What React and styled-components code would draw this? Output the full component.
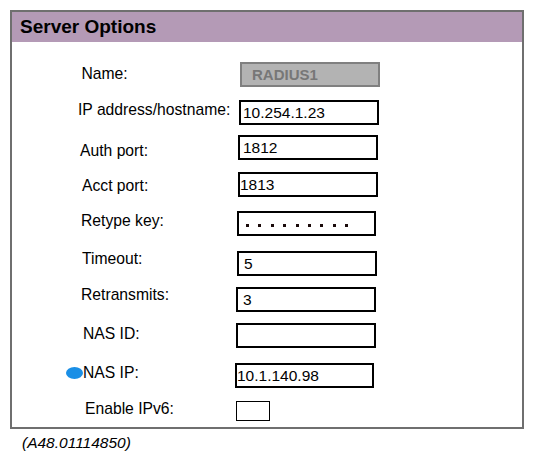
import React from "react";
import styled, { createGlobalStyle } from "styled-components";

const Global = createGlobalStyle`
  html, body { margin: 0; padding: 0; background: #ffffff; }
  body { font-family: "Liberation Sans", Arial, sans-serif; color: #000; }
`;

const Page = styled.div`
  padding: 10px 10px 0 10px;
  width: 514px;
`;

const Panel = styled.section`
  border: 2px solid #6f6f6f;
  background: #ffffff;
`;

const Header = styled.h2`
  margin: 0;
  height: 30px;
  line-height: 30px;
  padding-left: 8px;
  background: #b49ab6;
  font-size: 19px;
  font-weight: bold;
  color: #000;
`;

const Body = styled.div`
  display: flex;
  flex-direction: column;
  padding: 20px 0 6px 0;
`;

const Row = styled.div`
  display: grid;
  grid-template-columns: 223px auto;
  align-items: start;
  margin-top: ${(p) => p.$gap || 0}px;
`;

const Label = styled.div`
  display: flex;
  align-items: center;
  padding-left: ${(p) => p.$indent}px;
  margin-top: ${(p) => p.$drop || 0}px;
  font-size: 15.7px;
  line-height: 18px;
  white-space: nowrap;
`;

const Marker = styled.span`
  display: inline-block;
  width: 17px;
  height: 12px;
  border-radius: 50%;
  background: #1a8fe6;
  flex: none;
`;

const Field = styled.div`
  box-sizing: border-box;
  display: flex;
  align-items: center;
  margin-left: ${(p) => p.$shift}px;
  width: ${(p) => p.$w || 140}px;
  height: ${(p) => p.$h || 25}px;
  padding-left: ${(p) => p.$pad || 0}px;
  border: 2px solid #000;
  background: #fff;
  font-size: 15.5px;
  white-space: nowrap;
`;

const DisabledField = styled(Field)`
  border-color: #808080;
  background: #b3b3b3;
  color: #777777;
  font-weight: bold;
  font-size: 15px;
`;

const CheckBox = styled(Field)`
  border-width: 1.5px;
`;

const Dots = styled.div`
  display: flex;
  gap: 9.4px;
  margin-top: 4px;
`;

const Dot = styled.span`
  width: 3px;
  height: 3px;
  background: #1a0a0a;
`;

const Footnote = styled.p`
  margin: 5px 0 0 0;
  padding-left: 12px;
  font-size: 15.5px;
  line-height: 18px;
  font-style: italic;
`;

export default function App() {
  return (
    <>
      <Global />
      <Page>
        <Panel>
          <Header>Server Options</Header>
          <Body>
            <Row>
              <Label $indent={69.5} $drop={3}>Name:</Label>
              <DisabledField $shift={5} $w={140} $pad={10}>RADIUS1</DisabledField>
            </Row>
            <Row $gap={13}>
              <Label $indent={66} $drop={1}>IP address/hostname:</Label>
              <Field $shift={4} $w={140} $pad={2}>10.254.1.23</Field>
            </Row>
            <Row $gap={10}>
              <Label $indent={68} $drop={7}>Auth port:</Label>
              <Field $shift={3} $w={140} $pad={3}>1812</Field>
            </Row>
            <Row $gap={12}>
              <Label $indent={70} $drop={5}>Acct port:</Label>
              <Field $shift={3} $w={140} $pad={0}>1813</Field>
            </Row>
            <Row $gap={14}>
              <Label $indent={69} $drop={1}>Retype key:</Label>
              <Field $shift={2} $w={139} $pad={7}>
                <Dots>
                  {Array.from({ length: 9 }).map((_, i) => (
                    <Dot key={i} />
                  ))}
                </Dots>
              </Field>
            </Row>
            <Row $gap={15}>
              <Label $indent={70} $drop={-1}>Timeout:</Label>
              <Field $shift={2} $w={140} $pad={5}>5</Field>
            </Row>
            <Row $gap={11}>
              <Label $indent={69} $drop={-1}>Retransmits:</Label>
              <Field $shift={1} $w={140} $pad={5}>3</Field>
            </Row>
            <Row $gap={11}>
              <Label $indent={71} $drop={2}>NAS ID:</Label>
              <Field $shift={1} $w={140}></Field>
            </Row>
            <Row $gap={15}>
              <Label $indent={54} $drop={1}>
                <Marker />
                NAS IP:
              </Label>
              <Field $shift={0} $w={139} $pad={0}>10.1.140.98</Field>
            </Row>
            <Row $gap={13}>
              <Label $indent={73} $drop={-1}>Enable IPv6:</Label>
              <CheckBox $shift={1} $w={34} $h={20} />
            </Row>
          </Body>
        </Panel>
        <Footnote>(A48.01114850)</Footnote>
      </Page>
    </>
  );
}
